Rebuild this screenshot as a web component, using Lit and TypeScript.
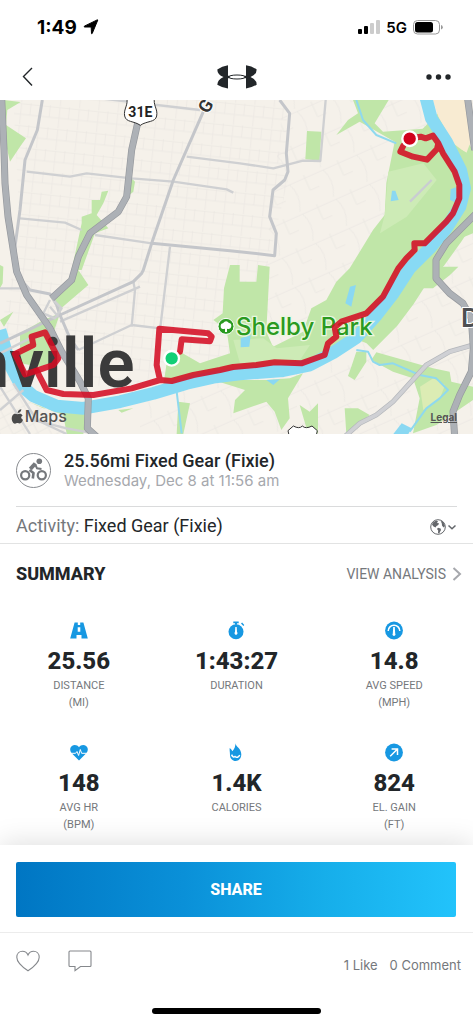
import { LitElement, html, css, svg } from "lit";
import { customElement } from "lit/decorators.js";

const ICONS: Record<string, unknown> = {
  road: svg`<path fill-rule="evenodd" d="M4.600 1.400h3.200v2.500h2.400v-2.500h3.200L17.800 17.600h-6.300v-3.600h-5v3.600H.2zM7.700 6.200v4.600h2.600V6.200z" />`,
  timer: svg`<circle cx="9" cy="10.700" r="7.500" /><path d="M6.300.5h5.400v1.700H10v1.500H8V2.200H6.300z M14 2.600l1.100-1 2.200 2.300-1 1z" />
    <path class="cut" d="M8.300 6h1.400l.3 5a1.500 1.500 0 1 1-2 0z" />`,
  gauge: svg`<circle cx="9" cy="9.500" r="8.900" /><path class="cut-line" d="M3.200 10a5.800 5.800 0 0 1 11.600 0" />
    <path class="cut" d="M8.200 6h1.600l.4 6.500a1.500 1.500 0 1 1-2.400 0z" />`,
  heart: svg`<path d="M9 17.500 1.500 10C-.5 7.500-.1 4.300 1.900 2.900 4.400 1.200 7.500 2 9 4.300c1.500-2.300 4.600-3.100 7.100-1.400 2 1.400 2.400 4.600.4 7.100z" />
    <path class="cut-thin" d="M0 10.300h5.600l1.400-1.800 1.600 4 1.700-6 1.300 3.800H18" />`,
  flame: svg`<path d="M8.300.3c.4 3.200 6 5.300 6 11 0 4-2.500 6.700-5.600 6.700s-5.700-2.400-5.700-6c0-3.200-.6-4.400-.3-7 1 .8 2 1.800 2.700 3.200C7.300 6.300 8.600 3.500 8.300.3z" />
    <path class="cut-line" d="M4.600 11.600c1 2.500 2.200 3 3.400 1.900 1.600 1.600 3.600.8 4.700-1.500" />`,
  climb: svg`<circle cx="9" cy="9.500" r="8.900" /><path class="cut-line" d="M5.200 13.300l7-7M6.600 6h5.900v5.900" />`,
};

const STATS = [
  { icon: "road", value: "25.56", label: "DISTANCE", unit: "(MI)" },
  { icon: "timer", value: "1:43:27", label: "DURATION", unit: "" },
  { icon: "gauge", value: "14.8", label: "AVG SPEED", unit: "(MPH)" },
  { icon: "heart", value: "148", label: "AVG HR", unit: "(BPM)" },
  { icon: "flame", value: "1.4K", label: "CALORIES", unit: "" },
  { icon: "climb", value: "824", label: "EL. GAIN", unit: "(FT)" },
];

@customElement("route-map")
class RouteMap extends LitElement {
  static styles = css`
    :host { display: block; position: relative; overflow: hidden; }
    .map { display: block; width: 100%; background: #f5f1ea; }
    .park { fill: #c0e6a8; }
    .pale { fill: #cdebb6; }
    .bank { fill: none; stroke: #c0e6a8; stroke-width: 84; stroke-linejoin: round; }
    .tan { fill: #f8ebd2; }
    .water { fill: none; stroke: #88daf4; stroke-width: 38; stroke-linejoin: round; }
    .stream { fill: none; stroke: #8fd9ee; stroke-width: 6; stroke-linejoin: round; }
    .pond { fill: #8ad8f2; }
    .street { fill: none; stroke: #e9e6e1; stroke-width: 2; }
    .road { fill: none; stroke: #cfd0d2; stroke-width: 7; stroke-linejoin: round; }
    .avenue { fill: none; stroke: #c4c6ca; stroke-width: 9; stroke-linejoin: round; }
    .highway-edge { fill: none; stroke: #96999e; stroke-width: 21; stroke-linejoin: round; }
    .highway { fill: none; stroke: #adb1b6; stroke-width: 17; stroke-linejoin: round; }
    .city { font: 600 207px Roboto, sans-serif; fill: #3b3b3b; }
    .place { font: 600 78px Inter, sans-serif; fill: #4d4f52; stroke: #fff; stroke-width: 6; paint-order: stroke; }
    .roadname { font: 700 54px Roboto, sans-serif; fill: #333; stroke: #fff; stroke-width: 5; paint-order: stroke; }
    .parkname { font: 500 72px Inter, sans-serif; fill: #2a9a20; stroke: #e9f7df; stroke-width: 8; paint-order: stroke; }
    .shield { fill: #fff; stroke: #333; stroke-width: 3; }
    .shieldname { font: 700 42px Roboto, sans-serif; fill: #222; }
    .brand { font: 500 48px Inter, sans-serif; fill: #555; }
    .mark { fill: #4a4a4a; }
    .route { fill: none; stroke: #d30c22; stroke-opacity: 0.87; stroke-width: 18; stroke-linejoin: round; stroke-linecap: round; }
    .badge { fill: #2a9a20; stroke: #fff; stroke-width: 3; }
    .tree { fill: #fff; }
    .start { fill: #12cf76; stroke: #fff; stroke-width: 7; }
    .finish { fill: #d0021b; stroke: #fff; stroke-width: 7; }
    .legal { position: absolute; right: 16px; bottom: 10px; font: 700 10px/14px Inter, sans-serif; color: #555; }
  `;

  render() {
    return html`
      <svg class="map" viewBox="0 0 1419 1002" role="img" aria-label="Route map">
        <defs>
          <pattern id="grid" width="58" height="66" patternUnits="userSpaceOnUse" patternTransform="rotate(6)">
            <path class="street" d="M0 4H58M0 36H58M8 4V66M36 0V36" />
          </pattern>
          <pattern id="loose" width="110" height="96" patternUnits="userSpaceOnUse" patternTransform="rotate(-24)">
            <path class="street" d="M0 10H110M30 10Q50 50 26 96M80 0V50H110" />
          </pattern>
          <pattern id="blocks" width="34" height="30" patternUnits="userSpaceOnUse" patternTransform="rotate(-28)">
            <path class="street" d="M0 4H34M6 0V30" />
          </pattern>
        </defs>
        <path fill="url(#grid)" d="M40 0H860V260L800 500 700 820 300 860 0 700 60 400z" />
        <path fill="url(#loose)" d="M850 0H1419V1002H420V880L760 800z" />
        <path fill="url(#blocks)" d="M0 780 60 880 260 940 250 1002H0z" />

        <path class="bank" d="M1294 60 1345 110 1405 210 1412 265 1402 320 1350 400 1300 470 1250 520 1205 590 1160 650 1090 720" />
        <path class="park" d="M1059 0H1166L1124 70 1149 95 1289 85 1385 210 1398 265 1385 320 1229 505 1130 645 1000 762 850 815 699 822 490 855 500 790 540 755 600 790 690 760 680 690 640 660 668 640 672 565 690 495 719 495 719 545 769 545 774 495 809 500 799 695 819 740 909 695 934 625 979 600 1009 545 1049 505 1119 390 1154 345 1159 250 1179 150 1184 125 1079 65 1009 105 1044 60 1074 40z" />
        <path class="pale" d="M1165 215 1270 190 1310 240 1220 350 1140 400 1154 345z M700 720 790 715 830 745 930 735 900 780 720 790z" />
        <path class="tan" d="M1299 0H1394L1414 120 1399 160 1359 130 1315 50z" />
        <path class="park" d="M1360 180H1419V168L1385 150z M1419 345 1350 430 1370 420 1419 400z M1250 500 1375 500 1350 525 1299 565H1244L1100 730 1075 720z" />
        <path class="park" d="M1069 755 1099 755V785L1064 840 1044 828 1054 800z M1114 780 1129 757 1299 805 1349 815 1354 845 1419 860V900L1339 955 1309 975 1239 1000 1259 895 1239 835 1179 815z" />
        <path class="park" d="M640 840H799L869 835 909 820 864 895 869 955 844 990 824 935 799 905 700 940 705 900 735 870z M899 915 929 935 954 910V1000H924z M1034 925H1074L1109 945 1059 985 1039 1002z" />
        <path fill="#dcecb4" d="M1260 860 1300 835 1335 855 1320 895 1270 930z" />
        <path class="park" d="M10 0 62 6 22 30 18 75 78 115 60 140 30 185 15 120z M305 275 325 272 310 310 290 345 325 385 285 400 245 510H215L245 370V350L275 340V300H300z M395 235 405 245 400 275 388 285z M921 93 964 95 959 182 916 178z" />
        <path class="park" d="M235 510 265 555 180 628 150 590 205 560z M0 660 40 635 12 680z M0 495 10 500 8 550 0 565z M60 700 130 660 180 640 160 700 180 780 120 800 60 790z M85 905 130 925 260 940 250 1002 200 1002 190 945z M355 930 400 925 365 938z M535 905 570 910 550 1002H530z" />
        <path fill="none" stroke="#c9ccd2" stroke-width="7" d="M1230 305 1295 240" />

        <path class="stream" d="M1069 0 1089 60 1129 105 1189 130M1069 750 1104 755 1119 785 1139 795 1179 790 1259 825 1309 835 1344 870 1319 895 1279 925 1229 995M530 875 545 1000" />
        <path class="pond" d="M1176 272 1186 272 1196 300 1172 304z M1352 268 1368 262 1372 310 1350 300z M1050 560 1068 555 1054 620 1036 610z M722 715 752 705 748 740 722 742z M799 840 840 838 820 855z M1205 970 1235 985 1225 1002H1180z" />
        <path class="water" d="M1277-10 1294 55 1339 125 1382 210 1394 265 1380 320 1339 385 1289 445 1229 505 1180 580 1130 645 1070 712 1000 758 930 795 850 812 720 822 640 832 560 850 460 880 360 905 250 925 170 918 100 888 62 855 30 795 0 690" />

        <path class="road" d="M80 215 210 230 260 220 395 235 520 245 680 268 700 278M60 355 195 368 245 390M285 405 420 425 455 430M560 170 720 190 820 205 909 182 961 183 977 0M300-5 600 30M510 440 480 690M395 680 405 570 400 545M395 675 480 685M395 675 235 750M0 565H70M180 665 420 560M0 760 120 700" />
        <path class="avenue" d="M127 0 112 90 75 180 60 330 45 440 50 525 90 570 150 582 170 615 180 645 210 715 235 750M610 35 520 240 455 430 430 510 425 520 400 545 180 645 0 730M839 0 869 40 859 160 864 215 854 240 819 270 809 350 829 400 824 467 690 452 455 430" />
        <path fill="none" stroke="#b3b6ba" stroke-width="15" d="M1419 735 1349 755 1279 795 1179 905 1129 945 1079 970 1034 1010" />
        <path fill="none" stroke="#cfd0d4" stroke-width="11" d="M1419 735 1349 755 1279 795 1179 905 1129 945 1079 970 1034 1010" />
        <path class="road" d="M150 600 130 640 165 655 185 625 160 600M150 620 175 650M0 860 90 1002M40 850 110 960 200 1002M0 930 70 870M100 960 200 985 290 1002" />
        <g id="highways">
          <path class="highway-edge" d="M5-5 12 150 15 250 24 350 50 515 80 585 150 685 185 755 240 845 265 895 262 985 290 1010M415 60 395 150 380 290 355 335 270 400 235 470 215 540 155 595M1402-10 1424 150M1429 340 1339 430 1308 480 1308 535 1349 580 1389 610 1414 655 1420 745 1414 815 1379 885 1359 935 1364 1010" />
          <path class="highway" d="M5-5 12 150 15 250 24 350 50 515 80 585 150 685 185 755 240 845 265 895 262 985 290 1010M415 60 395 150 380 290 355 335 270 400 235 470 215 540 155 595M1402-10 1424 150M1429 340 1339 430 1308 480 1308 535 1349 580 1389 610 1414 655 1420 745 1414 815 1379 885 1359 935 1364 1010" />
        </g>

        <path class="shield" d="M380-8C386 16 370 26 374 48 378 68 402 62 421 76 440 62 466 68 470 48 474 26 458 16 464-8z" />
        <text class="shieldname" x="421" y="51" text-anchor="middle">31E</text>
        <path class="shield" d="M868 1010 864 992 880 978Q898 988 907 978 917 988 936 978L952 992 948 1010z" />
        <text class="roadname" x="617" y="37" text-anchor="middle" transform="rotate(-60 617 18)">G</text>
        <text class="place" x="1383" y="681">D</text>
        <text class="city" x="404" y="860" text-anchor="end">nville</text>
        <circle class="badge" cx="678" cy="679" r="24" />
        <path class="tree" d="M675 696V686Q662 690 662 679 662 670 669 670 678 658 687 669 695 670 694 679 693 689 681 686V696z" />
        <text class="parkname" x="708" y="704">Shelby Park</text>
        <path class="mark" d="M64 929c-1 6-6 10-11 10 0-6 5-11 11-11zM68 947c-5-8-12-5-16-4-5-2-11-3-15 4-5 10 1 24 8 24 3 0 5-2 8-2s5 2 8 1c4-1 7-8 8-11-7-4-7-10-1-12z" />
        <text class="brand" x="74" y="965">Maps</text>

        <path class="route" d="M1229 115 1262 110 1277 115 1299 107 1315 130 1311 147 1281 179 1239 170 1201 155 1210 137M1315 130 1329 160 1364 215 1378 255V295L1359 340 1339 365 1309 395 1274 430 1243 430 1244 450 1219 475 1195 505 1149 590 1099 640 1024 665 1004 682 1009 710 984 730 974 765 904 790 824 787 769 795 699 801 660 810 580 825 515 843 480 840 395 865 280 885 190 882 140 870 110 812M480 840 470 795 478 686 625 700 635 710 630 724 545 718 540 755" />
        <path class="route" d="M110 812 75 823 45 762 100 735 95 710 135 697 175 775 160 795 130 805z" />
        <circle class="start" cx="515" cy="775" r="22" />
        <circle class="finish" cx="1229" cy="116" r="22" />
      </svg>
      <a class="legal" href="#legal">Legal</a>
    `;
  }
}

@customElement("app-root")
class AppRoot extends LitElement {
  static styles = css`
    :host { display: flex; flex-direction: column; min-height: 100vh; background: #fff; color: #222629; font-family: Roboto, sans-serif; }
    button { padding: 0; border: 0; background: none; color: inherit; font: inherit; display: flex; align-items: center; }
    a { color: inherit; text-decoration: none; }
    h1, h2, p, dl, dd { margin: 0; }
    svg { display: block; }
    .status { display: flex; justify-content: space-between; align-items: center; height: 54px; padding: 0 30px 0 37px; color: #000; font-family: Inter, sans-serif; }
    .clock, .signal { display: flex; align-items: center; gap: 6px; }
    .clock { font-size: 19px; font-weight: 700; }
    .signal { font-size: 15px; font-weight: 600; }
    .nav { display: flex; justify-content: space-between; align-items: center; height: 46px; padding: 0 22px; }
    .nav-title { padding-left: 13px; }
    .head { display: flex; align-items: center; gap: 13px; margin: 0 16px; height: 72px; border-bottom: 1px solid #dadbdc; }
    .title { font-size: 18px; line-height: 22px; font-weight: 500; }
    .date { font-size: 15px; line-height: 18px; color: #a6a8ad; font-family: Inter, sans-serif; }
    .activity { display: flex; justify-content: space-between; align-items: center; height: 36px; padding: 0 17px 0 16px; border-bottom: 1px solid #e2e3e3; font-size: 18px; }
    .muted { color: #75787c; }
    .privacy { padding-top: 4px; }
    .summary { flex: 1; padding: 18px 0 12px; }
    .bar { display: flex; justify-content: space-between; align-items: center; padding: 0 11px 0 16px; }
    .heading { font-size: 18px; line-height: 24px; font-weight: 800; }
    .more { display: flex; align-items: center; gap: 6px; font-size: 14px; color: #75787c; }
    .stats { display: grid; grid-template-columns: repeat(3, 1fr); row-gap: 32px; padding-top: 35px; }
    .stat { display: flex; flex-direction: column-reverse; justify-content: flex-end; align-items: center; text-align: center; }
    .label { font-size: 11px; line-height: 17px; color: #75787c; }
    .value { display: flex; flex-direction: column; align-items: center; font-size: 24px; line-height: 28px; font-weight: 800; padding-bottom: 2px; }
    .icon { fill: #1798e2; margin-bottom: 7px; }
    .cut { fill: #fff; }
    .cut-line { fill: none; stroke: #fff; stroke-width: 1.5; }
    .cut-thin { fill: none; stroke: #fff; stroke-width: 1; }
    .foot { background: #fff; box-shadow: 0 -2px 26px rgba(0, 0, 0, 0.13); }
    .cta { padding: 17px 17px 15px 16px; border-bottom: 1px solid #ececec; }
    .share { width: 100%; height: 55px; justify-content: center; border-radius: 2px; background: linear-gradient(90deg, #0076c3, #0a90d8 38%, #16aeea 70%, #22c3fb); color: #fff; font-size: 16px; font-weight: 800; }
    .social { display: flex; align-items: center; gap: 28px; padding: 16px 12px 0 16px; }
    .counts { display: flex; gap: 12px; margin-left: auto; padding-top: 8px; font-size: 13px; line-height: 16px; color: #75787c; font-family: Inter, sans-serif; }
    .home { width: 169px; height: 6px; margin: 35px auto 10px; border-radius: 3px; background: #000; }
  `;

  render() {
    return html`
      <div class="status">
        <div class="clock">
          <span>1:49</span>
          <svg width="16" height="16" viewBox="0 0 16 16"><path stroke="#000" stroke-linejoin="round" d="M14.800 1 9.200 14.500Q8.800 15.200 8.500 14.500L8.200 8H1.600Q.7 7.700 1.300 7.200L14.200.9Q14.800.7 14.800 1z" /></svg>
        </div>
        <div class="signal">
          <svg width="22" height="14" viewBox="0 0 22 14">
            <rect x="0" y="9" width="4" height="5" rx="1" /><rect x="6" y="6" width="4" height="8" rx="1" />
            <rect x="12" y="3" width="4" height="11" rx="1" fill="#ccc" /><rect x="18" y="0" width="4" height="14" rx="1" fill="#ccc" />
          </svg>
          <span>5G</span>
          <svg width="30" height="15" viewBox="0 0 30 15">
            <rect x=".5" y=".5" width="26" height="13.500" rx="4" fill="none" stroke="#999" /><rect x="2" y="2" width="18" height="10.500" rx="2.500" />
            <path d="M28 5v4.600q1.800-.6 1.800-2.300T28 5z" fill="#999" />
          </svg>
        </div>
      </div>
      <nav class="nav">
        <button aria-label="Back">
          <svg width="12" height="20" viewBox="0 0 12 20" fill="none" stroke="#222629" stroke-width="1.400"><path d="M10 1 1.500 9.500 10 18.500" /></svg>
        </button>
        <div class="nav-title">
          <svg width="40" height="24" viewBox="0 0 40 24" fill="#222629">
            <path d="M11 .3Q5 1.200.3 4.400.3 9.500 6.500 12 .5 14.500.3 19.700 5 22.600 11 23.600V13.600L13.500 12 11 10.400z M29 .3Q35 1.200 39.700 4.400 39.700 9.500 33.500 12 39.500 14.500 39.700 19.700 35 22.600 29 23.600V13.600L26.500 12 29 10.400z" />
            <ellipse cx="20" cy="12" rx="8.500" ry="2" fill="none" stroke="#222629" />
          </svg>
        </div>
        <button aria-label="More options">
          <svg width="25" height="6" viewBox="0 0 25 6" fill="#222629"><circle cx="3" cy="3" r="2.700" /><circle cx="12.500" cy="3" r="2.700" /><circle cx="22" cy="3" r="2.700" /></svg>
        </button>
      </nav>

      <route-map></route-map>

      <header class="head">
        <svg width="35" height="35" viewBox="0 0 35 35" fill="none">
          <circle cx="17.500" cy="17.500" r="17" stroke="#888b8f" />
          <g stroke="#75787c" stroke-width="2.200"><circle cx="9.200" cy="22.200" r="4.100" /><circle cx="25.800" cy="22.200" r="4.100" /></g>
          <circle cx="23.300" cy="8.300" r="2.800" fill="#75787c" />
          <path stroke="#75787c" stroke-width="2.600" stroke-linejoin="round" d="M16.800 25.500 17.500 20 13.500 17" />
          <path stroke="#75787c" stroke-width="4" stroke-linejoin="round" d="M14.300 16 19.300 10.500" />
          <path stroke="#75787c" stroke-width="2" d="M19 11 21 15.300 25.500 16" />
        </svg>
        <div>
          <h1 class="title">25.56mi Fixed Gear (Fixie)</h1>
          <p class="date">Wednesday, Dec 8 at 11:56 am</p>
        </div>
      </header>

      <div class="activity">
        <p><span class="muted">Activity:</span> Fixed Gear (Fixie)</p>
        <button class="privacy" aria-label="Privacy: everyone">
          <svg width="26" height="16" viewBox="0 0 26 16" fill="none" stroke="#64676b">
            <circle cx="8" cy="8" r="7.300" />
            <path fill="#64676b" stroke="none" d="M3 3.500 6 1.500 8 2.300 7 4 9 4.200 8.300 6 6.500 7 5.600 8.600 3.500 7.600 2 5.500zM8 8.700 10.600 9.500 11 11 9.200 14.500 8 14 8.200 11.500 7 10zM10.500 1.500 13.500 3.500 15 7 13.500 8.500 12 6.500 11.800 4.500z" />
            <path stroke-width="1.500" d="M18.500 6.500 22 9.800 25.500 6.500" />
          </svg>
        </button>
      </div>

      <section class="summary">
        <div class="bar">
          <h2 class="heading">SUMMARY</h2>
          <a class="more" href="#analysis">VIEW ANALYSIS
            <svg width="10" height="14" viewBox="0 0 10 14" fill="none" stroke="#a6a8ad" stroke-width="2"><path d="M1.500 1 8 7 1.500 13" /></svg>
          </a>
        </div>
        <dl class="stats">
          ${STATS.map(
            (s) => html`<div class="stat">
              <dt class="label">${s.label}<br />${s.unit}</dt>
              <dd class="value"><svg class="icon" width="18" height="19" viewBox="0 0 18 19" aria-hidden="true">${ICONS[s.icon]}</svg>${s.value}</dd>
            </div>`
          )}
        </dl>
      </section>

      <footer class="foot">
        <div class="cta"><button class="share">SHARE</button></div>
        <div class="social">
          <button aria-label="Like">
            <svg width="24" height="22" viewBox="0 0 24 22" fill="none" stroke="#85888c" stroke-width="1.100"><path d="M12 20.800C7 17.500.8 12.500.8 7.300.8 3.500 3.400 1.200 6.400 1.200 9 1.200 11 2.700 12 5 13 2.700 15 1.200 17.600 1.200c3 0 5.600 2.300 5.600 6.100C23.200 12.500 17 17.500 12 20.800z" /></svg>
          </button>
          <button aria-label="Comment">
            <svg width="24" height="22" viewBox="0 0 24 22" fill="none" stroke="#85888c" stroke-width="1.100"><path d="M2 1H22Q23 1 23 2V15.500Q23 16.500 22 16.500H12.500L7 20.700V16.500H2Q1 16.500 1 15.500V2Q1 1 2 1z" /></svg>
          </button>
          <div class="counts"><span>1 Like</span><span>0 Comment</span></div>
        </div>
        <div class="home"></div>
      </footer>
    `;
  }
}
